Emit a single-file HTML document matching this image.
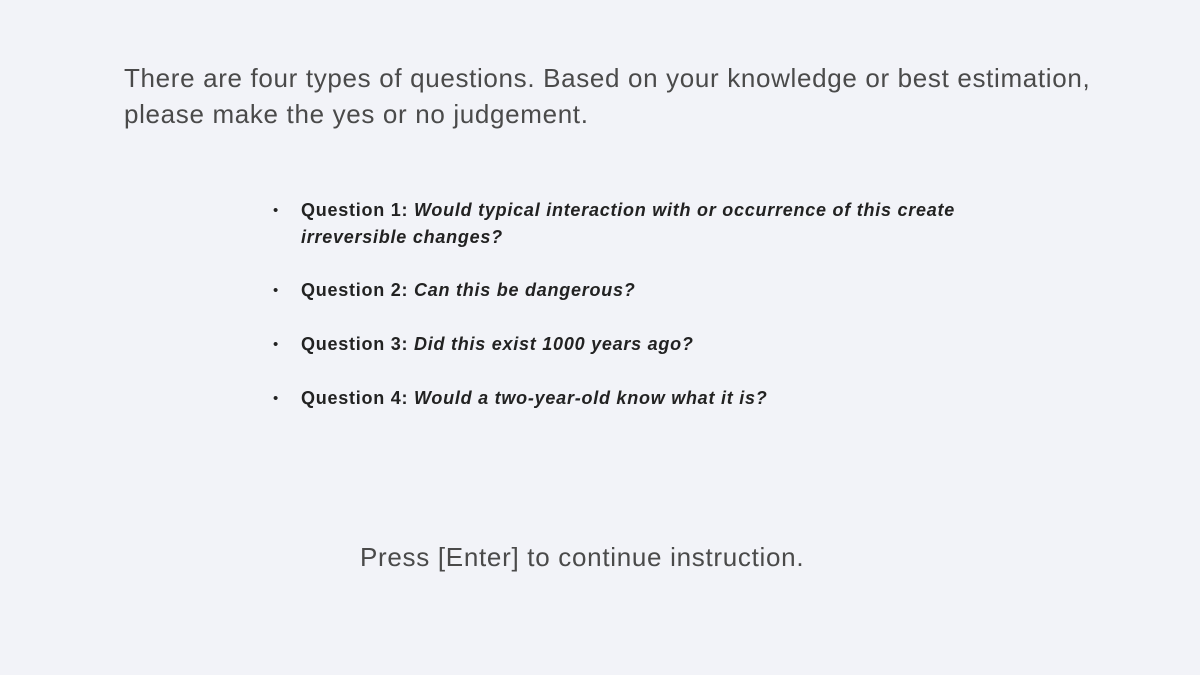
<!DOCTYPE html>
<html><head><style>
body{margin:0;width:1200px;height:675px;background:#f2f3f8;font-family:"Liberation Sans",sans-serif;position:relative;overflow:hidden}
.a{position:absolute;white-space:nowrap}
.h{color:#4a4a4a;font-size:26px;letter-spacing:0.66px;left:124px}
.q{color:#222;font-size:18px;letter-spacing:0.75px;font-weight:bold;left:301px}
.b{color:#222;font-size:15px;left:273px}
i{font-style:italic}
</style></head><body>
<div class="a h" style="top:63px">There are four types of questions. Based on your knowledge or best estimation,</div>
<div class="a h" style="top:99px">please make the yes or no judgement.</div>
<div class="a b" style="top:202px">•</div>
<div class="a q" style="top:200px">Question 1: <i>Would typical interaction with or occurrence of this create</i></div>
<div class="a q" style="top:227px"><i>irreversible changes?</i></div>
<div class="a b" style="top:282px">•</div>
<div class="a q" style="top:280px">Question 2: <i>Can this be dangerous?</i></div>
<div class="a b" style="top:336px">•</div>
<div class="a q" style="top:334px">Question 3: <i>Did this exist 1000 years ago?</i></div>
<div class="a b" style="top:390px">•</div>
<div class="a q" style="top:388px">Question 4: <i>Would a two-year-old know what it is?</i></div>
<div class="a h" style="left:360px;top:542px;letter-spacing:0.7px">Press [Enter] to continue instruction.</div>
</body></html>
